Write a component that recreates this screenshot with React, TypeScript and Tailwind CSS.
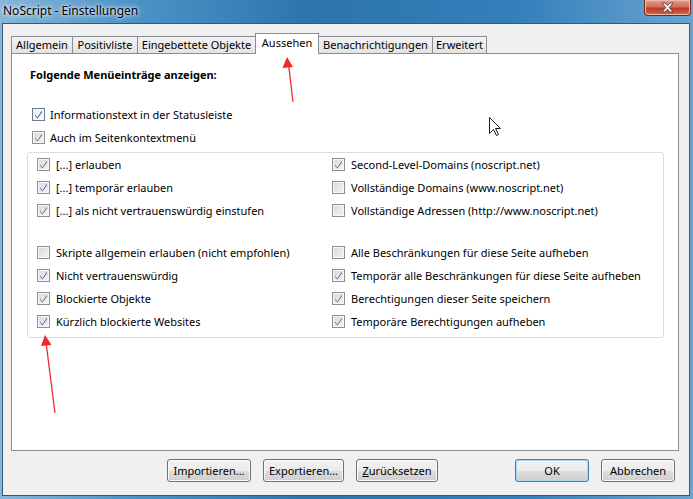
import React from 'react';

type Box = 'on' | 'focus' | 'off';

function CheckBox({ state }: { state: Box }) {
    const bg =
        state === 'focus'
            ? 'bg-[linear-gradient(135deg,#e4eef9,#fbfdff)]'
            : 'bg-[linear-gradient(135deg,#d8d8d8,#f5f5f5)]';
    return (
        <span
            className={`flex h-[13px] w-[13px] shrink-0 items-center justify-center border ${
                state === 'focus' ? 'border-[#6e7a8a]' : 'border-[#8f8f8f]'
            } ${bg}`}
        >
            <span className="flex h-[11px] w-[11px] items-center justify-center border border-[#f7f7f7]">
                {state !== 'off' && (
                    <svg width="9" height="9" viewBox="0 0 9 9">
                        <path
                            d="M1 4.5 L3.3 7.5 L8 0.8 L8 2.3 L3.4 8.6 L1 5.6 Z"
                            fill={state === 'focus' ? '#1c2f7e' : '#4a5e9e'}
                        />
                    </svg>
                )}
            </span>
        </span>
    );
}

function Row({ label, state, gap = 'gap-[6px]' }: { label: string; state: Box; gap?: string }) {
    return (
        <div className={`flex h-[23px] items-center ${gap}`}>
            <CheckBox state={state} />
            <span className="whitespace-nowrap">{label}</span>
        </div>
    );
}

const TABS = [
    { label: 'Allgemein', w: 'w-[62px]' },
    { label: 'Positivliste', w: 'w-[66px]' },
    { label: 'Eingebettete Objekte', w: 'w-[119px]' },
    { label: 'Aussehen', w: 'w-[64px]', active: true },
    { label: 'Benachrichtigungen', w: 'w-[115px]' },
    { label: 'Erweitert', w: 'w-[55px]' },
];

const GROUP_TOP: [string, Box, string, Box][] = [
    ['[...] erlauben', 'on', 'Second-Level-Domains (noscript.net)', 'on'],
    ['[...] temporär erlauben', 'on', 'Vollständige Domains (www.noscript.net)', 'off'],
    ['[...] als nicht vertrauenswürdig einstufen', 'on', 'Vollständige Adressen (http://www.noscript.net)', 'off'],
];

const GROUP_BOTTOM: [string, Box, string, Box][] = [
    ['Skripte allgemein erlauben (nicht empfohlen)', 'off', 'Alle Beschränkungen für diese Seite aufheben', 'off'],
    ['Nicht vertrauenswürdig', 'on', 'Temporär alle Beschränkungen für diese Seite aufheben', 'on'],
    ['Blockierte Objekte', 'on', 'Berechtigungen dieser Seite speichern', 'on'],
    ['Kürzlich blockierte Websites', 'on', 'Temporäre Berechtigungen aufheben', 'on'],
];

function Button({ w, children, primary }: { w: string; children: React.ReactNode; primary?: boolean }) {
    return (
        <div
            className={`flex h-[23px] ${w} items-center justify-center rounded-[3px] border ${
                primary
                    ? 'border-[#3c7fb1] shadow-[inset_0_0_0_1px_#a6d8f3]'
                    : 'border-[#707070] shadow-[inset_0_0_0_1px_#fbfbfb]'
            } bg-[linear-gradient(180deg,#f2f2f2_0%,#ebebeb_50%,#dddddd_51%,#cfcfcf_100%)]`}
        >
            {children}
        </div>
    );
}

export default function App() {
    return (
        <div className="relative flex h-[499px] w-[693px] flex-col overflow-hidden bg-[linear-gradient(90deg,#86b6da_0%,#4f95c8_18%,#2c74ad_45%,#3480bb_75%,#6aa4cf_100%)] font-['Noto_Sans','Liberation_Sans',sans-serif] text-[11px] leading-[16px] text-black">
            {/* title bar */}
            <div className="flex h-[23px] shrink-0 items-start justify-between">
                <span className="pl-[3px] pt-[3px] text-[12px] text-black [text-shadow:0_0_6px_#ffffff,0_0_3px_#ffffff]">
                    NoScript - Einstellungen
                </span>
                <div className="mr-[2px] flex h-[16px] w-[47px] items-center justify-center rounded-b-[4px] border border-t-0 border-[#6b2b22] bg-[linear-gradient(180deg,#e49c8c_0%,#d36f5c_45%,#bd3b22_55%,#cf6a45_100%)] shadow-[inset_0_0_0_1px_#f0b7aa]">
                    <svg width="13" height="11" viewBox="0 0 13 11">
                        <path
                            d="M1 1 L4 1 L6.5 3.8 L9 1 L12 1 L8.2 5.5 L12 10 L9 10 L6.5 7.2 L4 10 L1 10 L4.8 5.5 Z"
                            fill="#ffffff"
                            stroke="#3b3b3b"
                            strokeWidth="0.8"
                        />
                    </svg>
                </div>
            </div>

            {/* client area */}
            <div className="mb-[3px] ml-[2px] mr-[3px] flex flex-1 flex-col border border-[#3b5772] bg-[#f0f0f0]">
                <div className="pl-[8px] pr-[10px] pt-[9px]">
                    {/* tabs */}
                    <div className="relative z-10 flex h-[20px] items-end">
                        {TABS.map((t, i) => (
                            <div
                                key={t.label}
                                className={`${t.w} ${i > 0 ? '-ml-px' : ''} flex shrink-0 justify-center whitespace-nowrap border border-b-0 border-[#898c95] ${
                                    t.active
                                        ? 'relative z-10 -mb-px h-[21px] bg-white pt-[1px]'
                                        : 'h-[17px] bg-[linear-gradient(180deg,#f3f3f3,#e3e3e3)]'
                                }`}
                            >
                                {t.label}
                            </div>
                        ))}
                    </div>

                    {/* panel */}
                    <div className="h-[398px] border border-[#898c95] bg-white">
                        <div className="ml-[18px] mt-[13px] h-[16px] font-bold">Folgende Menüeinträge anzeigen:</div>
                        <div className="ml-[20px] mt-[20px]">
                            <Row label="Informationstext in der Statusleiste" state="focus" gap="gap-[5px]" />
                            <Row label="Auch im Seitenkontextmenü" state="on" gap="gap-[5px]" />
                        </div>
                        <div className="ml-[15px] mt-[3px] h-[186px] w-[637px] rounded-[3px] border border-[#d5dfe5] pl-[9px]">
                            <div className="grid grid-cols-[295px_1fr]">
                                {GROUP_TOP.map(([a, sa, b, sb]) => (
                                    <React.Fragment key={a}>
                                        <Row label={a} state={sa} />
                                        <Row label={b} state={sb} />
                                    </React.Fragment>
                                ))}
                            </div>
                            <div className="mt-[19px] grid grid-cols-[295px_1fr]">
                                {GROUP_BOTTOM.map(([a, sa, b, sb]) => (
                                    <React.Fragment key={a}>
                                        <Row label={a} state={sa} />
                                        <Row label={b} state={sb} />
                                    </React.Fragment>
                                ))}
                            </div>
                        </div>
                    </div>
                </div>

                {/* buttons */}
                <div className="flex pl-[164px] pr-[14px] pt-[8px]">
                    <div className="flex gap-[12px]">
                        <Button w="w-[84px]">Importieren...</Button>
                        <Button w="w-[81px]">Exportieren...</Button>
                        <Button w="w-[82px]">
                            <span>
                                <span className="underline">Z</span>urücksetzen
                            </span>
                        </Button>
                    </div>
                    <div className="ml-auto flex gap-[12px]">
                        <Button w="w-[74px]" primary>
                            OK
                        </Button>
                        <Button w="w-[74px]">Abbrechen</Button>
                    </div>
                </div>
            </div>

            {/* annotations */}
            <svg className="pointer-events-none absolute left-0 top-0" width="693" height="499">
                <line x1="293" y1="102" x2="288.5" y2="64" stroke="#ee2a2f" strokeWidth="1.3" />
                <polygon points="287,57 282.5,68 293,67" fill="#ee2a2f" />
                <line x1="55" y1="413" x2="46" y2="342" stroke="#ee2a2f" strokeWidth="1.3" />
                <polygon points="45,335 41,346 51.5,345" fill="#ee2a2f" />
                <path
                    d="M489.5 117.5 L489.5 133.5 L493.5 129.5 L496.5 135.5 L498.5 134.5 L495.5 128.5 L500.5 128.5 Z"
                    fill="#ffffff"
                    stroke="#1a1a2a"
                    strokeWidth="1"
                />
            </svg>
        </div>
    );
}
